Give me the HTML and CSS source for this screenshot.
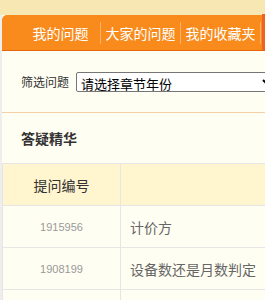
FILE: index.html
```html
<!DOCTYPE html>
<html lang="zh-CN">
<head>
  <meta charset="UTF-8" />
  <title>答疑精华</title>
  <link rel="stylesheet" href="styles.css">
</head>
<body>

<div class="top"></div>

<div class="page">
  <div class="tabs">
    <a class="tab">我的问题</a>
    <a class="tab">大家的问题</a>
    <a class="tab">我的收藏夹</a>
    <a class="tab tab-hot"></a>
  </div>

  <div class="filter">
    <label for="year">筛选问题</label>
    <select id="year">
      <option>请选择章节年份</option>
    </select>
  </div>

  <h3 class="title">答疑精华</h3>

  <table class="list">
    <tr>
      <th class="num">提问编号</th>
      <th></th>
    </tr>
    <tr>
      <td class="num">1915956</td>
      <td>计价方</td>
    </tr>
    <tr>
      <td class="num">1908199</td>
      <td>设备数还是月数判定</td>
    </tr>
    <tr>
      <td class="num"></td>
      <td></td>
    </tr>
  </table>
</div>

</body>
</html>
```

FILE: styles.css
```css
html, body { overflow: hidden; }
body {
  margin: 0;
  font-family: "Noto Sans CJK SC", "Noto Sans", sans-serif;
  background: #eeeeee;
  color: #333;
}
.top { height: 15px; background: #f7e8b3; }
.page {
  margin-left: 2px;
  width: 600px;
  background: #fffef3;
}
.tabs {
  display: flex;
  align-items: center;
  height: 35px;
  padding-left: 19px;
  background: #f98b1d;
  border-bottom: 1px solid #e8640f;
  border-top-left-radius: 5px;
}
.tab {
  width: 79px;
  height: 22px;
  line-height: 22px;
  text-align: center;
  font-size: 14px;
  color: #fff;
  border-right: 1px solid #fbb070;
}
.tab-hot {
  align-self: stretch;
  height: auto;
  margin-left: 1px;
  margin-top: -1px;
  background: #ec6420;
  border: none;
}
.filter {
  display: flex;
  align-items: center;
  height: 61px;
  padding-left: 19px;
  border-bottom: 1px solid #f5cfa5;
}
.filter label { font-size: 12px; color: #333; margin-right: 7px; }
.filter select {
  width: 200px;
  height: 20px;
  font-size: 13px;
  font-family: "Noto Sans CJK SC", sans-serif;
  color: #000;
  background: #fff;
  border: 1px solid #767676;
  border-radius: 2px;
  padding: 0;
}
.title {
  margin: 0;
  height: 50px;
  line-height: 50px;
  padding-left: 19px;
  font-size: 14px;
  font-weight: bold;
  color: #333;
}
.list {
  width: 560px;
  border-collapse: collapse;
}
.list th, .list td {
  height: 41px;
  padding: 0 0 0 9px;
  border: 1px solid #e6e6e6;
  text-align: left;
  font-size: 14px;
  font-weight: normal;
  color: #666;
}
.list th { background: #fff5cf; color: #333; }
.list .num {
  width: 117px;
  padding: 0;
  text-align: center;
}
.list td.num {
  font-family: "Liberation Sans", sans-serif;
  font-size: 11px;
  color: #999;
}
```
